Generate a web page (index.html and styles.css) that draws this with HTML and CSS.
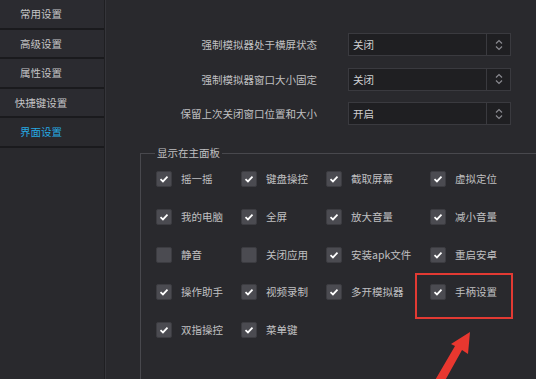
FILE: index.html
```html
<!DOCTYPE html>
<html lang="zh-CN">
<head>
    <meta charset="UTF-8">
    <title>界面设置</title>
    <link rel="stylesheet" href="styles.css">
</head>
<body>
<div class="window">
    <nav class="sidebar">
        <div class="tab">常用设置</div>
        <div class="tab">高级设置</div>
        <div class="tab">属性设置</div>
        <div class="tab">快捷键设置</div>
        <div class="tab active">界面设置</div>
    </nav>

    <main class="content">
        <div class="form">
            <label class="form-label">强制模拟器处于横屏状态</label>
            <div class="select"><span>关闭</span><i class="spin"><svg viewBox="0 0 8 12" width="8" height="12"><path d="M1 4.5 L4 1.5 L7 4.5 M1 7.5 L4 10.5 L7 7.5" fill="none" stroke="#8a8a90" stroke-width="1.2"/></svg></i></div>

            <label class="form-label">强制模拟器窗口大小固定</label>
            <div class="select"><span>关闭</span><i class="spin"><svg viewBox="0 0 8 12" width="8" height="12"><path d="M1 4.5 L4 1.5 L7 4.5 M1 7.5 L4 10.5 L7 7.5" fill="none" stroke="#8a8a90" stroke-width="1.2"/></svg></i></div>

            <label class="form-label">保留上次关闭窗口位置和大小</label>
            <div class="select"><span>开启</span><i class="spin"><svg viewBox="0 0 8 12" width="8" height="12"><path d="M1 4.5 L4 1.5 L7 4.5 M1 7.5 L4 10.5 L7 7.5" fill="none" stroke="#8a8a90" stroke-width="1.2"/></svg></i></div>
        </div>

        <fieldset class="group">
            <legend>显示在主面板</legend>
            <div class="checks">
                <div class="check on"><b></b>摇一摇</div>
                <div class="check on"><b></b>键盘操控</div>
                <div class="check on"><b></b>截取屏幕</div>
                <div class="check on"><b></b>虚拟定位</div>

                <div class="check on"><b></b>我的电脑</div>
                <div class="check on"><b></b>全屏</div>
                <div class="check on"><b></b>放大音量</div>
                <div class="check on"><b></b>减小音量</div>

                <div class="check"><b></b>静音</div>
                <div class="check"><b></b>关闭应用</div>
                <div class="check on"><b></b>安装apk文件</div>
                <div class="check on"><b></b>重启安卓</div>

                <div class="check on"><b></b>操作助手</div>
                <div class="check on"><b></b>视频录制</div>
                <div class="check on"><b></b>多开模拟器</div>
                <div class="check on"><b></b>手柄设置</div>

                <div class="check on"><b></b>双指操控</div>
                <div class="check on"><b></b>菜单键</div>
            </div>
        </fieldset>
    </main>

    <div class="highlight"></div>
    <svg class="arrow" viewBox="425 325 60 54" width="60" height="54">
        <polygon points="470,332 468,354 462,350 442,386 434,382 455,346 451,344" fill="#e8372f"/>
    </svg>
</div>
</body>
</html>
```

FILE: styles.css
```css
body {
    margin: 0;
    background: #29292d;
    font-family: "Noto Sans CJK SC", "Noto Sans", sans-serif;
    font-size: 10.5px;
    color: #c0c0c2;
}

.window {
    position: relative;
    display: flex;
    width: 536px;
    height: 379px;
    overflow: hidden;
}

/* left tabs */
.sidebar {
    width: 104px;
    flex: none;
    border-right: 1px solid #1f1f22;
}
.tab {
    height: 27.5px;
    line-height: 27.5px;
    padding-right: 22px;
    text-align: center;
    background: #2b2b30;
    border-bottom: 2px solid #1a1a1d;
    color: #c4c4c6;
}
.tab.active {
    color: #27a8e2;
    background: #29292d;
}

.content {
    flex: 1;
    border-left: 1px solid #35353a;
}

/* option rows */
.form {
    display: grid;
    grid-template-columns: 211px 163px;
    column-gap: 31px;
    row-gap: 11.5px;
    padding-top: 33px;
}
.form-label {
    text-align: right;
    line-height: 23px;
}
.select {
    display: flex;
    height: 21px;
    background: #1f1f22;
    border: 1px solid #3a3a3f;
    color: #d0d0d2;
}
.select span {
    flex: 1;
    line-height: 21px;
    padding-left: 4px;
}
.spin {
    width: 23px;
    display: flex;
    align-items: center;
    justify-content: center;
    border-left: 1px solid #3a3a3f;
}

/* group box */
.group {
    margin: 20px 0 0 34px;
    padding: 0 0 0 15px;
    border: 0;
    border-top: 1px solid #48484d;
    border-left: 1px solid #48484d;
    height: 300px;
    min-width: 0;
}
.group legend {
    margin-left: -1px;
    padding: 0 2px;
    line-height: 16px;
}

.checks {
    display: grid;
    grid-template-columns: 85px 85px 104px 90px;
    grid-auto-rows: 16px;
    row-gap: 21.75px;
    margin-top: 10px;
}
.check {
    display: flex;
    align-items: center;
    gap: 9px;
    white-space: nowrap;
    line-height: 16px;
}
.check b {
    width: 16px;
    height: 16px;
    flex: none;
    box-sizing: border-box;
    border-radius: 2px;
    background: #4b4b51;
    border: 1px solid #3c3c41;
}
.check.on b {
    background: #4b4b51 url("data:image/svg+xml,%3Csvg xmlns='http://www.w3.org/2000/svg' viewBox='0 0 16 16'%3E%3Cpath d='M4 8.2 L6.8 10.8 L12 5.2' fill='none' stroke='white' stroke-width='2'/%3E%3C/svg%3E") center / 14px 14px no-repeat;
}

/* annotation */
.highlight {
    position: absolute;
    left: 415px;
    top: 273px;
    width: 94px;
    height: 42px;
    border: 2px solid #e23a33;
}
.arrow {
    position: absolute;
    left: 425px;
    top: 325px;
}
```
